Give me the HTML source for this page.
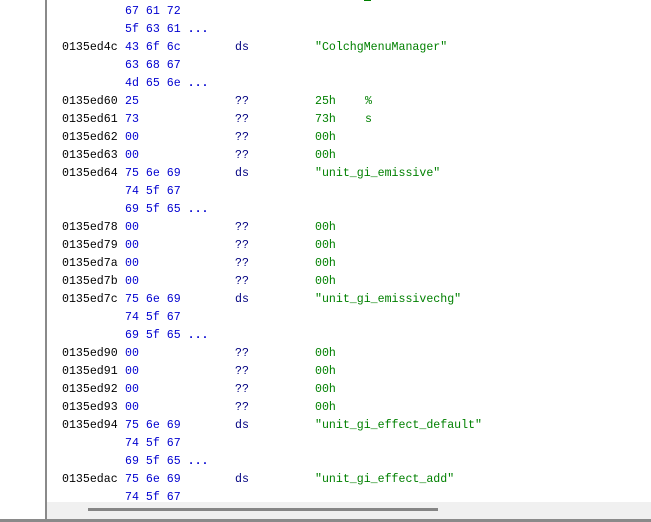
<!DOCTYPE html>
<html><head><style>
body{margin:0;width:651px;height:522px;background:#fff;position:relative;overflow:hidden;font-family:"Liberation Mono",monospace;font-size:11.6px;}
.v{position:absolute;left:45px;top:0;width:2px;height:520px;background:#8a8a8a;}
.r{position:absolute;height:18px;line-height:18px;white-space:pre;}
.a{position:absolute;left:62px;color:#000;}
.b{position:absolute;left:125px;color:#0000d0;}
.m{position:absolute;left:235px;color:#000080;}
.o{position:absolute;left:315px;color:#008000;}
.c{position:absolute;left:365px;color:#008000;}
.sb{position:absolute;left:47px;top:502px;width:604px;height:17px;background:#f0f0f0;}
.th{position:absolute;left:88px;top:508px;width:350px;height:3px;background:#858585;}
.bl{position:absolute;left:0;top:519px;width:651px;height:3px;background:#8a8a8a;}
</style></head><body>
<div style="position:absolute;left:364px;top:0;width:7px;height:1px;background:#008000"></div>
<div id="rows"></div>
<div class="r" style="top:3px"><span class="b">67 61 72</span></div>
<div class="r" style="top:21px"><span class="b">5f 63 61 <b>...</b></span></div>
<div class="r" style="top:39px"><span class="a">0135ed4c</span><span class="b">43 6f 6c</span><span class="m">ds</span><span class="o">"ColchgMenuManager"</span></div>
<div class="r" style="top:57px"><span class="b">63 68 67</span></div>
<div class="r" style="top:75px"><span class="b">4d 65 6e <b>...</b></span></div>
<div class="r" style="top:93px"><span class="a">0135ed60</span><span class="b">25</span><span class="m">??</span><span class="o">25h</span><span class="c">%</span></div>
<div class="r" style="top:111px"><span class="a">0135ed61</span><span class="b">73</span><span class="m">??</span><span class="o">73h</span><span class="c">s</span></div>
<div class="r" style="top:129px"><span class="a">0135ed62</span><span class="b">00</span><span class="m">??</span><span class="o">00h</span></div>
<div class="r" style="top:147px"><span class="a">0135ed63</span><span class="b">00</span><span class="m">??</span><span class="o">00h</span></div>
<div class="r" style="top:165px"><span class="a">0135ed64</span><span class="b">75 6e 69</span><span class="m">ds</span><span class="o">"unit_gi_emissive"</span></div>
<div class="r" style="top:183px"><span class="b">74 5f 67</span></div>
<div class="r" style="top:201px"><span class="b">69 5f 65 <b>...</b></span></div>
<div class="r" style="top:219px"><span class="a">0135ed78</span><span class="b">00</span><span class="m">??</span><span class="o">00h</span></div>
<div class="r" style="top:237px"><span class="a">0135ed79</span><span class="b">00</span><span class="m">??</span><span class="o">00h</span></div>
<div class="r" style="top:255px"><span class="a">0135ed7a</span><span class="b">00</span><span class="m">??</span><span class="o">00h</span></div>
<div class="r" style="top:273px"><span class="a">0135ed7b</span><span class="b">00</span><span class="m">??</span><span class="o">00h</span></div>
<div class="r" style="top:291px"><span class="a">0135ed7c</span><span class="b">75 6e 69</span><span class="m">ds</span><span class="o">"unit_gi_emissivechg"</span></div>
<div class="r" style="top:309px"><span class="b">74 5f 67</span></div>
<div class="r" style="top:327px"><span class="b">69 5f 65 <b>...</b></span></div>
<div class="r" style="top:345px"><span class="a">0135ed90</span><span class="b">00</span><span class="m">??</span><span class="o">00h</span></div>
<div class="r" style="top:363px"><span class="a">0135ed91</span><span class="b">00</span><span class="m">??</span><span class="o">00h</span></div>
<div class="r" style="top:381px"><span class="a">0135ed92</span><span class="b">00</span><span class="m">??</span><span class="o">00h</span></div>
<div class="r" style="top:399px"><span class="a">0135ed93</span><span class="b">00</span><span class="m">??</span><span class="o">00h</span></div>
<div class="r" style="top:417px"><span class="a">0135ed94</span><span class="b">75 6e 69</span><span class="m">ds</span><span class="o">"unit_gi_effect_default"</span></div>
<div class="r" style="top:435px"><span class="b">74 5f 67</span></div>
<div class="r" style="top:453px"><span class="b">69 5f 65 <b>...</b></span></div>
<div class="r" style="top:471px"><span class="a">0135edac</span><span class="b">75 6e 69</span><span class="m">ds</span><span class="o">"unit_gi_effect_add"</span></div>
<div class="r" style="top:489px"><span class="b">74 5f 67</span></div>
<div class="v"></div>
<div class="sb"></div>
<div class="th"></div>
<div class="bl"></div>
</body></html>
